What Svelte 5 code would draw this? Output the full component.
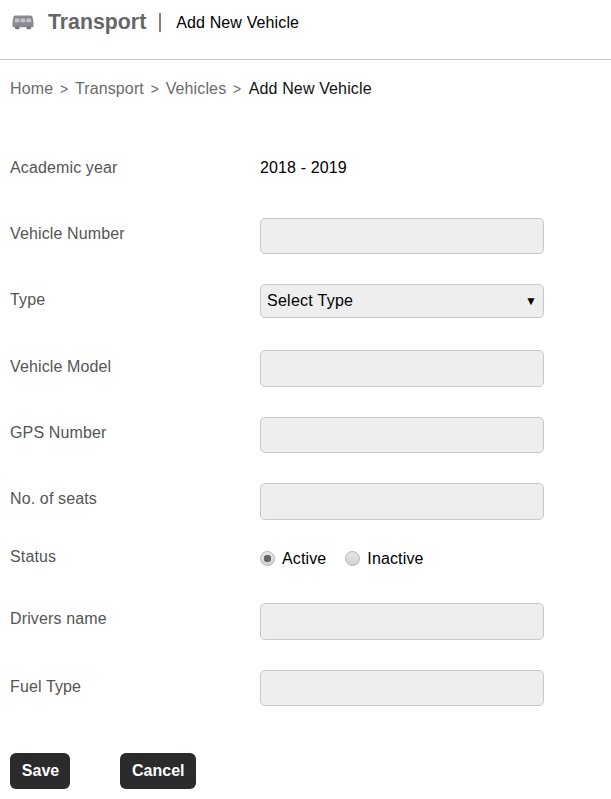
<script lang="ts">
	const crumbs = ['Home', 'Transport', 'Vehicles'];
</script>

<div class="page">
	<header class="title-bar">
		<svg class="bus" viewBox="0 0 22 16" width="22" height="16" aria-hidden="true">
			<path fill="#8a8a94" d="M3.500 1.500h15c1.200 0 2 .8 2.200 2l.8 5v3.500c0 .8-.5 1.200-1.200 1.200H1.700C1 13.200.5 12.800.5 12V8.500l.8-5c.2-1.200 1-2 2.200-2z" />
			<path fill="#c4c5cb" d="M3.200 4.500h4.300v3.800H2.700zM8.800 4.500h4.400v3.800H8.800zM14.500 4.500h4.300l.5 3.800h-4.800z" />
			<rect x="3" y="12.500" width="4.500" height="2.800" rx="1" fill="#76767f" />
			<rect x="14.500" y="12.500" width="4.500" height="2.800" rx="1" fill="#76767f" />
		</svg>
		<h1>Transport</h1>
		<span class="divider"></span>
		<span class="subtitle">Add New Vehicle</span>
	</header>

	<nav class="breadcrumb">
		{#each crumbs as crumb}
			<span class="crumb">{crumb}</span>
			<span class="sep">&gt;</span>
		{/each}
		<span class="current">Add New Vehicle</span>
	</nav>

	<form class="form">
		<div class="row year">
			<span class="label">Academic year</span>
			<span class="value">2018 - 2019</span>
		</div>
		<div class="row">
			<span class="label">Vehicle Number</span>
			<input class="field" type="text" />
		</div>
		<div class="row select-row">
			<span class="label">Type</span>
			<div class="select-wrap">
				<select class="field select">
					<option>Select Type</option>
				</select>
				<span class="arrow">▼</span>
			</div>
		</div>
		<div class="row low">
			<span class="label">Vehicle Model</span>
			<input class="field" type="text" />
		</div>
		<div class="row">
			<span class="label">GPS Number</span>
			<input class="field" type="text" />
		</div>
		<div class="row">
			<span class="label">No. of seats</span>
			<input class="field" type="text" />
		</div>
		<div class="row status">
			<span class="label">Status</span>
			<div class="radios">
				<label class="radio"><input type="radio" name="status" checked /><span>Active</span></label>
				<label class="radio"><input type="radio" name="status" /><span>Inactive</span></label>
			</div>
		</div>
		<div class="row">
			<span class="label">Drivers name</span>
			<input class="field" type="text" />
		</div>
		<div class="row low">
			<span class="label">Fuel Type</span>
			<input class="field" type="text" />
		</div>

		<div class="actions">
			<button type="button" class="btn save">Save</button>
			<button type="button" class="btn">Cancel</button>
		</div>
	</form>
</div>

<style>
	:global(body) {
		margin: 0;
		background: #fff;
		font-family: 'Liberation Sans', Arial, sans-serif;
	}

	.page {
		width: 611px;
		height: 799px;
		overflow: hidden;
		font-size: 16px;
		letter-spacing: 0.13px;
		color: #000;
	}

	.title-bar {
		display: flex;
		align-items: center;
		height: 60px;
		padding: 0 0 15px 12px;
		box-sizing: border-box;
		border-bottom: 1px solid #ccc;
	}

	.bus {
		margin-right: 14px;
	}

	h1 {
		margin: 0;
		font-size: 21.3px;
		font-weight: bold;
		letter-spacing: 0;
		color: #666;
	}

	.divider {
		width: 2px;
		height: 19px;
		margin: 0 15px 0 13px;
		background: #8c7f7f;
	}

	.subtitle {
		margin-top: 2px;
	}

	.breadcrumb {
		display: flex;
		gap: 6px;
		padding: 20px 0 0 10px;
		line-height: 18px;
		color: #6b6b6b;
	}

	.sep {
		font-size: 14px;
		margin: 0 0.7px;
	}

	.current {
		margin-left: 0.8px;
		color: #111;
	}

	.form {
		padding: 0 10px;
	}

	.row {
		display: grid;
		grid-template-columns: 250px 284px;
		align-items: start;
		margin-bottom: 30px;
	}

	.label {
		color: #555;
		line-height: 18px;
		padding-top: 7px;
	}

	.low .label {
		padding-top: 8px;
	}

	.year {
		margin-top: 61px;
		margin-bottom: 40.5px;
	}

	.year .label {
		padding-top: 0;
	}

	.year .value {
		line-height: 18px;
	}

	.select-row {
		margin-bottom: 32px;
	}

	.status {
		margin-top: -2px;
		margin-bottom: 35.5px;
	}

	.status .label {
		padding-top: 0;
	}

	.field {
		display: block;
		width: 284px;
		height: 36.5px;
		box-sizing: border-box;
		margin: 0;
		border: 1px solid #c8c8c8;
		border-radius: 5px;
		background: #eee;
		font: inherit;
	}

	.select-wrap {
		position: relative;
	}

	.select {
		height: 34px;
		padding: 0 0 2px 6px;
		appearance: none;
		letter-spacing: 0.27px;
		color: #000;
	}

	.arrow {
		position: absolute;
		right: 7px;
		top: 11px;
		font-size: 12px;
		line-height: 13px;
		pointer-events: none;
	}

	.radios {
		display: flex;
		gap: 19px;
		padding-top: 2px;
	}

	.radio {
		display: flex;
		align-items: center;
		gap: 7px;
		line-height: 18px;
	}

	.radio input {
		appearance: none;
		width: 15px;
		height: 15px;
		margin: 0;
		border: 1px solid #b5b5b5;
		border-radius: 50%;
		background: linear-gradient(#e6e6e6, #d2d2d2);
	}

	.radio input:checked {
		background: radial-gradient(circle, #666 0 3.5px, transparent 4px), linear-gradient(#e6e6e6, #d2d2d2);
	}

	.actions {
		display: flex;
		gap: 50px;
		margin-top: 47px;
	}

	.btn {
		height: 36px;
		padding: 0 12px;
		border: 0;
		border-radius: 6px;
		background: #2b2b2d;
		color: #fff;
		font: bold 16px 'Liberation Sans', Arial, sans-serif;
	}

	.save {
		width: 60px;
		padding: 0 0 0 1px;
	}
</style>
